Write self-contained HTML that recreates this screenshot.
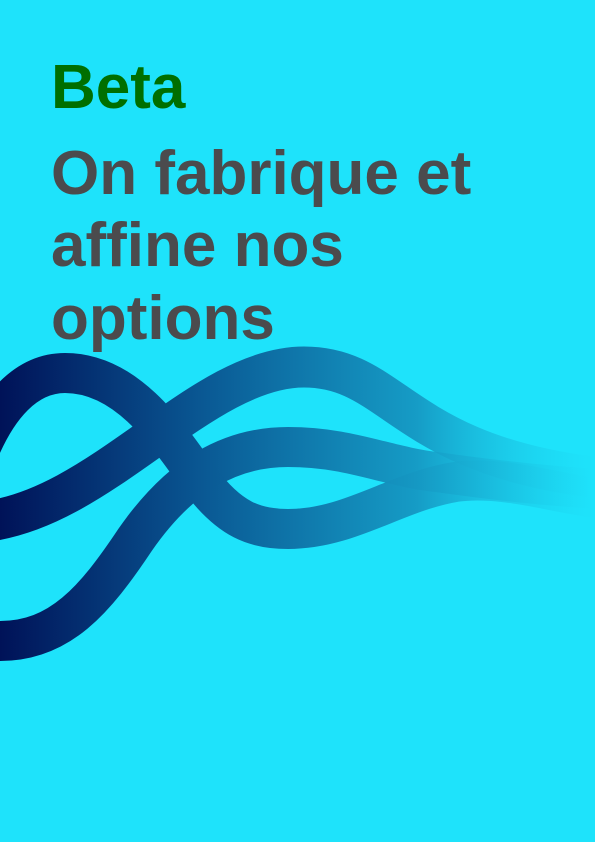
<!DOCTYPE html>
<html><head><meta charset="utf-8"><style>
html,body{margin:0;padding:0;}
body{width:595px;height:842px;background:#1ee3fb;position:relative;overflow:hidden;font-family:"Liberation Sans",Arial,sans-serif;font-weight:bold;}
.t{position:absolute;left:51px;margin:0;white-space:nowrap;}
#beta{color:#006f00;font-size:62px;top:57px;line-height:62px;}
.h{color:#4b4b4d;font-size:62px;line-height:62px;}
svg{position:absolute;left:0;top:0;}
</style></head><body>
<div class="t" id="beta">Beta</div>
<div class="t h" style="top:143px">On fabrique et</div>
<div class="t h" style="top:215px">affine nos</div>
<div class="t h" style="top:288px">options</div>
<svg width="595" height="842" viewBox="0 0 595 842">
<defs>
<linearGradient id="g" x1="0" y1="0" x2="595" y2="0" gradientUnits="userSpaceOnUse">
<stop offset="0" stop-color="#001258"/>
<stop offset="0.35" stop-color="#0a5a95"/>
<stop offset="0.7" stop-color="#1598c3" stop-opacity="0.95"/>
<stop offset="1" stop-color="#1ee3fb" stop-opacity="0.3"/>
</linearGradient>
</defs>
<g fill="none" stroke="url(#g)" stroke-linecap="butt">
<path d="M-30,475 C-5,400 30,373 65,373 C125,373 165,430 200,480 C230,520 255,529 288,529 C350,529 395,492 455,482 C505,475 560,495 600,498" stroke-width="40"/>
<path d="M0,641 C60,641 95,600 135,540 C180,475 230,447 288,447 C350,447 385,466 436,472 C500,481 560,487 600,489" stroke-width="40"/>
<path d="M-20,522 C100,512 200,367 304,367 C395,367 400,455 600,478" stroke-width="41"/>
</g>
</svg>
</body></html>
